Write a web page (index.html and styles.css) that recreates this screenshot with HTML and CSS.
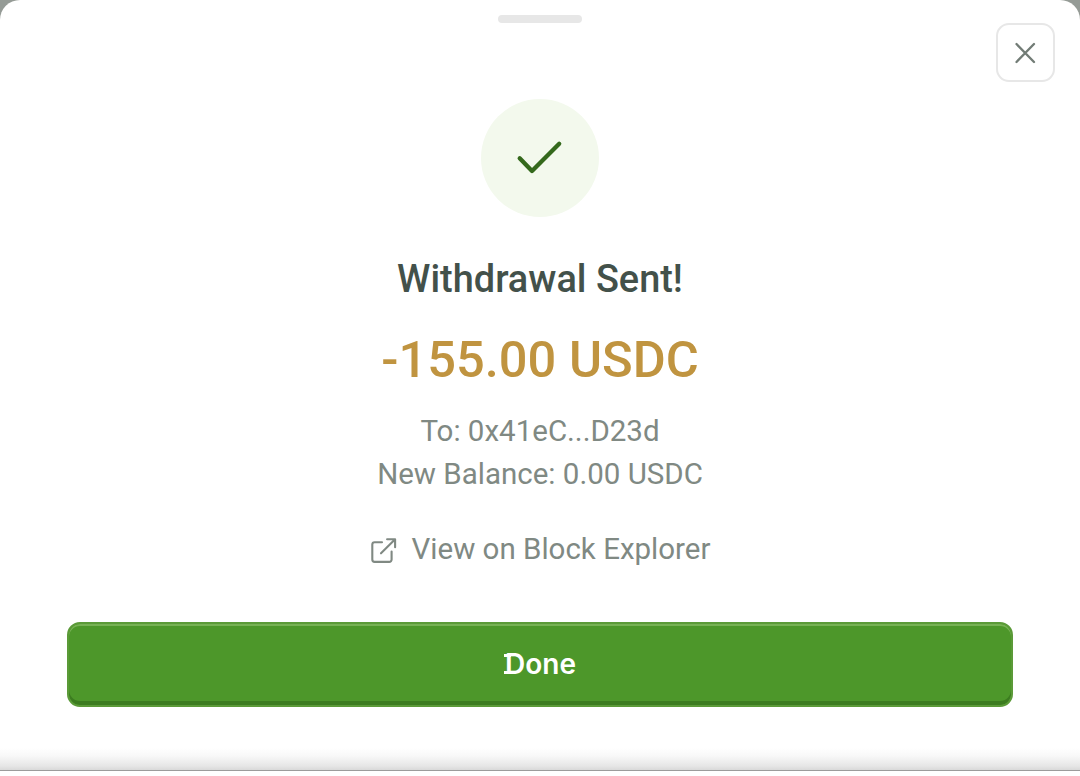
FILE: index.html
```html
<!DOCTYPE html>
<html lang="en">
<head>
<meta charset="utf-8">
<title>Withdrawal Sent</title>
<link rel="stylesheet" href="styles.css">
</head>
<body>
<main class="sheet">
  <div class="handle"></div>
  <button class="close" aria-label="Close">
    <svg width="20" height="20" viewBox="0 0 20 20"><path d="M.5 1 18 19M18 1 .5 19"/></svg>
  </button>
  <div class="status">
    <svg width="46" height="34" viewBox="0 0 46 34"><path d="M2.7 17.2 15 29.9 42.2 2.7"/></svg>
  </div>
  <h1 class="title">Withdrawal Sent!</h1>
  <p class="amount">-155.00 USDC</p>
  <p class="detail">To: 0x41eC...D23d</p>
  <p class="detail">New Balance: 0.00 USDC</p>
  <a class="explorer">
    <svg width="26" height="26" viewBox="0.5 0 26 26"><path d="M11.5 5.2H4.1A2.3 2.3 0 0 0 1.8 7.5V22.6A2.3 2.3 0 0 0 4.1 24.9H18.8A2.3 2.3 0 0 0 21.1 22.6V14.6M10.5 16.3 24.6 2.3M16.6 2.3H24.6V10.3"/></svg>
    <span>View on Block Explorer</span>
  </a>
  <button class="done"><span class="done-label">Done</span></button>
</main>
</body>
</html>
```
FILE: styles.css
```css
*, *::before { box-sizing: border-box; }
body {
  margin: 0;
  height: 776px;
  overflow: hidden;
  background: linear-gradient(#959b96 0 100px, #fff 100px);
  font-family: Roboto, "Liberation Sans", sans-serif;
}
.sheet {
  position: relative;
  height: 771px;
  padding: 15px 67px 0;
  display: flex;
  flex-direction: column;
  align-items: center;
  border-radius: 20px 20px 0 0;
  border-bottom: 1px solid #9c9c9c;
  background: linear-gradient(#fff 0 748px, #f8f8f8 756px, #e6e6e6 766px, #d9d9d9 770px);
}
.handle { width: 84px; height: 8px; border-radius: 4px; background: #e7e7e7; }
.close {
  position: absolute;
  top: 23px;
  right: 25px;
  width: 59px;
  height: 59px;
  padding: 0;
  display: grid;
  place-items: center;
  border: 2px solid #e7e7e7;
  border-radius: 13px;
  background: #fff;
}
svg { fill: none; stroke-linecap: round; stroke-linejoin: round; overflow: visible; }
.close svg { stroke: #727c76; stroke-width: 2.3; }
.status {
  width: 118px;
  height: 118px;
  margin-top: 76px;
  display: grid;
  place-items: center;
  border-radius: 50%;
  background: #f3f9ed;
}
.status svg { stroke: #34691c; stroke-width: 4.3; }
.title, .amount, .detail { margin: 0; white-space: nowrap; }
.title { margin-top: 37px; font-size: 37.9px; line-height: 50px; font-weight: 500; color: #43514a; }
.amount { margin-top: 24px; font-size: 50.6px; line-height: 64px; font-weight: 500; color: #c09440; }
.detail { font-size: 29.5px; line-height: 43px; color: #808983; }
.amount + .detail { margin-top: 18px; }
.explorer {
  margin-top: 32px;
  padding-left: 1px;
  display: flex;
  align-items: center;
  gap: 15px;
  font-size: 29.5px;
  line-height: 43px;
  color: #808983;
}
.explorer svg { stroke: #808983; stroke-width: 2.1; }
.done {
  width: 946px;
  height: 85px;
  margin-top: 51px;
  padding: 0 0 1px 1px;
  border: 2px solid #5b9a38;
  border-radius: 13px;
  background: #4d972a;
  box-shadow: inset 0 2px #77b154, inset 0 -4px #3c7c20;
  color: #fff;
  font: 600 28px Inter, sans-serif;
}
.done-label { position: relative; }
.done-label::before {
  content: "";
  position: absolute;
  left: -1px;
  top: 7px;
  width: 7px;
  height: 20px;
  border: solid #fff;
  border-width: 3px 0;
}
```
